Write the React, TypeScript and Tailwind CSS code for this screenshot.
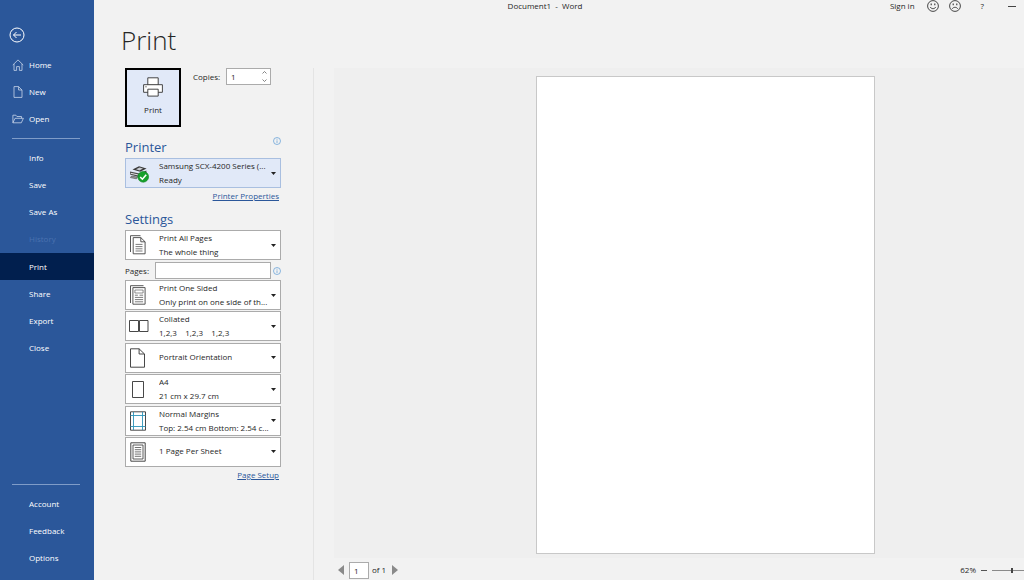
import React, { useState } from 'react';

interface Setting {
  id: string;
  label: string;
  title: string;
  detail?: string;
  icon: React.ReactNode;
}

const BackIcon = () => (
  <svg viewBox="0 0 16 16" className="h-4 w-4" fill="none" stroke="currentColor" strokeWidth="1">
    <circle cx="8" cy="8" r="7" />
    <path d="M12 8H4.5M7.5 5L4.5 8l3 3" />
  </svg>
);

const HomeIcon = () => (
  <svg viewBox="0 0 12 12" className="h-3 w-3" fill="none" stroke="#c9d6ea" strokeWidth="0.8">
    <path d="M0.8 6L6 0.9 11.2 6M2 5v6.4h2.6V7.6h2.8v3.8H10V5" />
  </svg>
);

const NewIcon = () => (
  <svg viewBox="0 0 12 12" className="h-3 w-3" fill="none" stroke="#c9d6ea" strokeWidth="0.8">
    <path d="M2 0.6h4.6L10 4v7.4H2zM6.6 0.6V4H10" />
  </svg>
);

const OpenIcon = () => (
  <svg viewBox="0 0 12 12" className="h-3 w-3" fill="none" stroke="#c9d6ea" strokeWidth="0.8">
    <path d="M0.9 9.8V2.2h3l1 1.3h4.6v1.8M0.9 9.8L3 5.3h8.4L9.3 9.8z" />
  </svg>
);

const PrinterIcon = () => (
  <svg viewBox="0 0 20 20" className="h-5 w-5" fill="#fff" stroke="#333" strokeWidth="0.9">
    <path d="M4.8 0.8h10.4v7.4H4.8z" />
    <path d="M0.6 7.7h18.8v7.6H0.6z" />
    <path d="M4.8 12.2h10.4v6.9H4.8z" />
    <path d="M2.4 9.8h1.2" />
  </svg>
);

const DeviceIcon = () => (
  <svg viewBox="0 0 22 20" className="h-5 w-[22px]">
    <path d="M3.5 6.4L10 3.2l7.6 2.2-6.4 3.4z" fill="#3b3b3b" />
    <path d="M7 6.2l3.6-1.6 3.4 1-3.6 1.8z" fill="#c8ccd2" />
    <path d="M1 8.6l9.4 2 7-3v2.6l-7 4L1 11.6z" fill="#4a4a4a" />
    <path d="M1.6 9.8l7.8 1.8v1l-7.8-1.8z" fill="#e4e6ea" />
    <path d="M2.6 13l5.8 1.2-1 1.6-6-1.2z" fill="#999" stroke="#444" strokeWidth="0.6" />
    <circle cx="14.2" cy="13.8" r="5.4" fill="#16a02c" stroke="#0d8420" strokeWidth="0.6" />
    <path d="M11.2 14l2.2 2.2 3.8-4.4" fill="none" stroke="#fff" strokeWidth="1.6" />
  </svg>
);

const PagesIcon = () => (
  <svg viewBox="0 0 18 20" className="h-5 w-[18px]" fill="none" stroke="#444" strokeWidth="0.9">
    <path d="M1.5 17V0.7h10" />
    <path d="M4.2 2.6h7.6l4.3 4.2v12H4.2zM11.8 2.6v4.2h4.3" fill="#fff" />
    <path d="M6.5 9.4h7M6.5 11.6h7M6.5 13.8h7M6.5 16h7" strokeWidth="0.7" />
  </svg>
);

const OneSidedIcon = () => (
  <svg viewBox="0 0 18 20" className="h-5 w-[18px]" fill="none" stroke="#444" strokeWidth="0.9">
    <path d="M1.5 18V0.7h13" />
    <path d="M3.9 2.6h12.2v16.6H3.9z" fill="#fff" />
    <path d="M5.9 5h8.2v3H5.9z" strokeWidth="0.6" />
    <path d="M5.9 10.2h3M10.5 10.2h3.6M5.9 12.4h8.2M5.9 14.6h8.2M5.9 16.8h8.2" strokeWidth="0.7" />
  </svg>
);

const CollatedIcon = () => (
  <svg viewBox="0 0 20 20" className="h-5 w-5" fill="none" stroke="#333" strokeWidth="0.9">
    <path d="M0.5 4.5h9v11h-9zM10.5 4.5h8.5v11h-8.5z" />
  </svg>
);

const PortraitIcon = () => (
  <svg viewBox="0 0 18 20" className="h-5 w-[18px]" fill="none" stroke="#333" strokeWidth="0.9">
    <path d="M1.5 0.8h8.6l5.4 5.2v13.2h-14zM10.1 0.8V6h5.4" />
  </svg>
);

const SheetIcon = () => (
  <svg viewBox="0 0 18 20" className="h-5 w-[18px]" fill="none" stroke="#333" strokeWidth="0.9">
    <path d="M3.5 2.5h11v16h-11z" />
  </svg>
);

const MarginsIcon = () => (
  <svg viewBox="0 0 18 20" className="h-5 w-[18px]" fill="none" strokeWidth="0.9">
    <path d="M1.5 0.8h15v18.4h-15z" stroke="#333" />
    <path d="M4.5 1v18M13.5 1v18M1.5 4.5h15M1.5 15.5h15" stroke="#2e93b8" />
  </svg>
);

const PerSheetIcon = () => (
  <svg viewBox="0 0 18 20" className="h-5 w-[18px]" fill="none" stroke="#333" strokeWidth="0.9">
    <path d="M1.8 0.8h14.4v18.4H1.8z" />
    <path d="M4 3h10v14H4z" strokeWidth="0.8" />
    <path d="M5.8 5.5h6.4M5.8 7.7h6.4M5.8 9.9h6.4M5.8 12.1h6.4M5.8 14.3h6.4" strokeWidth="0.7" />
  </svg>
);

const InfoIcon = () => (
  <svg viewBox="0 0 8 8" className="h-2 w-2" fill="none" stroke="#5b9bd5" strokeWidth="0.7">
    <circle cx="4" cy="4" r="3.5" />
    <path d="M4 3.4v2.6M4 1.8v0.9" />
  </svg>
);

const FaceIcon = ({ sad = false }: { sad?: boolean }) => (
  <svg viewBox="0 0 12 12" className="h-3 w-3" fill="none" stroke="#333" strokeWidth="0.9">
    <circle cx="6" cy="6" r="5.4" />
    <path d="M4.2 3.6v1.6M7.8 3.6v1.6" strokeWidth="1.1" />
    <path d={sad ? 'M3.2 8.8c1.2-2 4.4-2 5.6 0' : 'M3.2 7c1.2 2.2 4.4 2.2 5.6 0'} />
  </svg>
);

const settings: Setting[] = [
  { id: 'sides', label: 'Sides', title: 'Print One Sided', detail: 'Only print on one side of th...', icon: <OneSidedIcon /> },
  { id: 'collation', label: 'Collation', title: 'Collated', detail: '1,2,3    1,2,3    1,2,3', icon: <CollatedIcon /> },
  { id: 'orientation', label: 'Orientation', title: 'Portrait Orientation', icon: <PortraitIcon /> },
  { id: 'paper', label: 'Paper size', title: 'A4', detail: '21 cm x 29.7 cm', icon: <SheetIcon /> },
  { id: 'margins', label: 'Margins', title: 'Normal Margins', detail: 'Top: 2.54 cm Bottom: 2.54 c...', icon: <MarginsIcon /> },
  { id: 'per-sheet', label: 'Pages per sheet', title: '1 Page Per Sheet', icon: <PerSheetIcon /> },
];

const SettingSelect = ({ setting, highlighted = false }: { setting: Setting; highlighted?: boolean }) => (
  <div className={`grid h-[30px] border ${highlighted ? 'border-[#a9bfe0] bg-[#e1e9f8]' : 'border-[#ababab] bg-white'}`}>
    <select
      id={setting.id}
      aria-label={setting.label}
      className={`col-start-1 row-start-1 h-7 w-full appearance-none bg-transparent pl-[33px] leading-[13px] ${setting.detail ? 'pb-[15px]' : 'pb-[2px]'}`}
    >
      <option>{setting.title}</option>
    </select>
    <div className="pointer-events-none col-start-1 row-start-1 flex h-7 items-center">
      <span className="flex w-[33px] pl-[3px]">{setting.icon}</span>
      <span className="flex-1 self-end pb-px leading-[13px] whitespace-pre">{setting.detail}</span>
      <svg viewBox="0 0 5 3" className="mr-[4px] h-[3px] w-[5px]">
        <path d="M0 0h5L2.5 3z" fill="#222" />
      </svg>
    </div>
  </div>
);

const NavItem = ({ label, icon, active = false, disabled = false }: {
  label: string;
  icon?: React.ReactNode;
  active?: boolean;
  disabled?: boolean;
}) => (
  <button
    disabled={disabled}
    className={`flex w-full items-center text-left font-medium ${icon ? 'gap-[5px] pl-3' : 'pl-[29px]'} ${active ? 'bg-[#011f4e]' : ''} ${disabled ? 'text-[#4a72b0]' : 'text-white'}`}
  >
    {icon}
    {label}
  </button>
);

export default function App() {
  const [copies, setCopies] = useState(1);

  return (
    <div className="flex h-screen min-h-[580px] overflow-hidden bg-[#f2f2f2] font-['Open_Sans',sans-serif] text-[8px] leading-3 text-[#262626]">
      {/* Sidebar */}
      <nav className="flex w-[94px] shrink-0 flex-col bg-[#2b579a] pt-[27px] pb-2 text-white">
        <button aria-label="Back" className="ml-[9px] w-4">
          <BackIcon />
        </button>
        <div className="mt-2 grid h-[82px] grid-rows-3">
          <NavItem label="Home" icon={<HomeIcon />} />
          <NavItem label="New" icon={<NewIcon />} />
          <NavItem label="Open" icon={<OpenIcon />} />
        </div>
        <hr className="mt-[5px] mr-[14px] ml-3 border-[#7f9cc8]" />
        <div className="mt-[5px] grid h-[218px] grid-rows-8">
          <NavItem label="Info" />
          <NavItem label="Save" />
          <NavItem label="Save As" />
          <NavItem label="History" disabled />
          <NavItem label="Print" active />
          <NavItem label="Share" />
          <NavItem label="Export" />
          <NavItem label="Close" />
        </div>
        <hr className="mt-auto mr-[14px] ml-3 border-[#7f9cc8]" />
        <div className="mt-[5px] grid h-[82px] grid-rows-3">
          <NavItem label="Account" />
          <NavItem label="Feedback" />
          <NavItem label="Options" />
        </div>
      </nav>

      <div className="flex min-w-0 flex-1 flex-col">
        {/* Title bar */}
        <header className="flex h-3 items-center">
          <div className="flex-1" />
          <div className="pr-5 whitespace-pre">Document1  -  Word</div>
          <div className="flex flex-1 items-center justify-end pr-2">
            <button className="mr-3">Sign in</button>
            <button aria-label="Send a smile" className="mr-[10px]"><FaceIcon /></button>
            <button aria-label="Send a frown" className="mr-5"><FaceIcon sad /></button>
            <button aria-label="Help" className="mr-6">?</button>
            <button aria-label="Minimize" className="h-px w-2 bg-[#444]" />
          </div>
        </header>

        <h1 className="h-14 pl-[27px] text-[26px] leading-[56px] font-light">Print</h1>

        <div className="flex min-h-0 flex-1">
          {/* Print options */}
          <section className="w-[220px] shrink-0 border-r border-[#e4e4e4] pr-8 pl-[31px]">
            <div className="flex items-start">
              <button className="flex h-[59px] w-14 flex-col items-center border-2 border-black bg-[#e1e9f8] pt-[7px] font-medium">
                <PrinterIcon />
                <span className="mt-[7px]">Print</span>
              </button>
              <label htmlFor="copies" className="ml-3 leading-[17px]">Copies:</label>
              <div className="ml-auto mr-[10px] flex h-[17px] w-[45px] border border-[#ababab] bg-white">
                <input
                  id="copies"
                  inputMode="numeric"
                  value={copies}
                  onChange={(e) => setCopies(Number(e.target.value) || 1)}
                  className="w-[35px] pl-1 outline-none"
                />
                <div className="flex flex-col justify-around">
                  <button aria-label="More copies" onClick={() => setCopies(copies + 1)}>
                    <svg viewBox="0 0 5 3" className="h-[3px] w-[5px]" fill="none" stroke="#666" strokeWidth="0.8">
                      <path d="M0.5 2.5l2-2 2 2" />
                    </svg>
                  </button>
                  <button aria-label="Fewer copies" onClick={() => setCopies(Math.max(1, copies - 1))}>
                    <svg viewBox="0 0 5 3" className="h-[3px] w-[5px]" fill="none" stroke="#666" strokeWidth="0.8">
                      <path d="M0.5 0.5l2 2 2-2" />
                    </svg>
                  </button>
                </div>
              </div>
            </div>

            <div className="mt-[10px] flex h-5 items-start justify-between">
              <h2 className="text-[13px] leading-5 text-[#2b579a]">Printer</h2>
              <InfoIcon />
            </div>
            <div className="mt-px">
              <SettingSelect
                highlighted
                setting={{ id: 'printer', label: 'Printer', title: 'Samsung SCX-4200 Series (...', detail: 'Ready', icon: <DeviceIcon /> }}
              />
            </div>
            <div className="mt-[2px] flex justify-end pr-[2px]">
              <a href="#properties" className="text-[#2b579a] underline">Printer Properties</a>
            </div>

            <h2 className="mt-[7px] text-[13px] leading-5 text-[#2b579a]">Settings</h2>
            <div className="mt-px">
              <SettingSelect
                setting={{ id: 'range', label: 'Print range', title: 'Print All Pages', detail: 'The whole thing', icon: <PagesIcon /> }}
              />
            </div>
            <div className="mt-[2px] flex h-[17px] items-center">
              <label htmlFor="pages" className="w-[30px]">Pages:</label>
              <input id="pages" className="mr-[2px] h-[17px] min-w-0 flex-1 border border-[#ababab] bg-white px-1 outline-none" />
              <InfoIcon />
            </div>
            <div className="mt-px flex h-[187px] flex-col justify-between">
              {settings.map((setting) => (
                <SettingSelect key={setting.id} setting={setting} />
              ))}
            </div>
            <div className="mt-[2px] flex justify-end pr-[2px]">
              <a href="#page-setup" className="text-[#2b579a] underline">Page Setup</a>
            </div>
          </section>

          {/* Preview */}
          <section className="ml-5 flex min-w-0 flex-1 flex-col">
            <div className="flex min-h-0 flex-1 justify-center bg-[#efefef] pt-2 pb-1 pl-[53px]">
              <div className="aspect-[339/478] h-full border border-[#c8c8c8] bg-white" />
            </div>
            <footer className="flex h-[22px] items-center pt-[2px] pl-1">
              <button aria-label="Previous page">
                <svg viewBox="0 0 6 10" className="h-[10px] w-[6px]"><path d="M6 0v10L0 5z" fill="#8a8a8a" /></svg>
              </button>
              <input aria-label="Current page" defaultValue="1" className="ml-[5px] h-[17px] w-5 border border-[#ababab] bg-white pl-1 outline-none" />
              <span className="ml-[3px]">of 1</span>
              <button aria-label="Next page" className="ml-[6px]">
                <svg viewBox="0 0 6 10" className="h-[10px] w-[6px]"><path d="M0 0v10l6-5z" fill="#8a8a8a" /></svg>
              </button>
              <label htmlFor="zoom" className="ml-auto">62%</label>
              <button aria-label="Zoom out" className="mx-[5px] h-px w-[6px] bg-[#555]" />
              <input
                id="zoom"
                type="range"
                defaultValue="62"
                className="h-[7px] w-8 appearance-none bg-transparent [&::-webkit-slider-runnable-track]:h-px [&::-webkit-slider-runnable-track]:bg-[#8a8a8a] [&::-webkit-slider-thumb]:-mt-[2px] [&::-webkit-slider-thumb]:h-[5px] [&::-webkit-slider-thumb]:w-[2px] [&::-webkit-slider-thumb]:appearance-none [&::-webkit-slider-thumb]:bg-[#444]"
              />
            </footer>
          </section>
        </div>
      </div>
    </div>
  );
}
